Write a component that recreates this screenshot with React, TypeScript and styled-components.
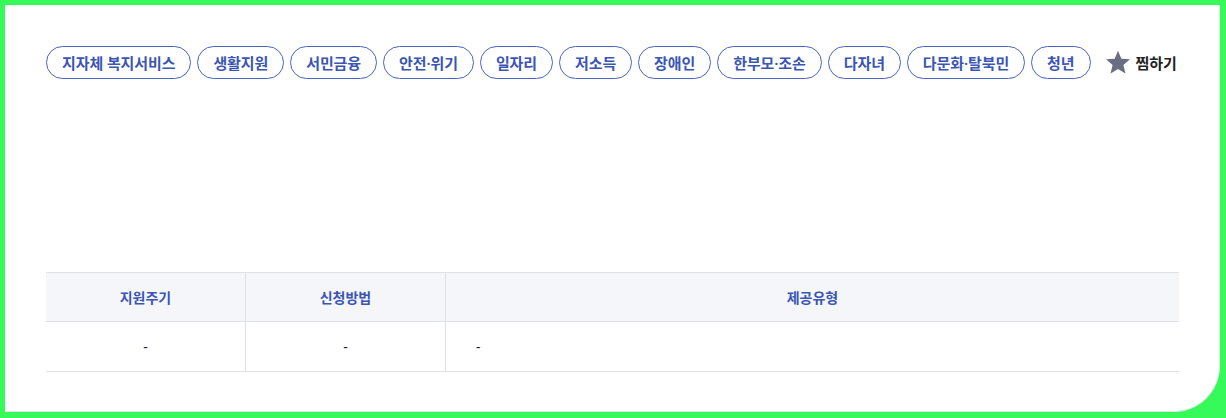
import React from "react";
import styled, { createGlobalStyle } from "styled-components";

const Global = createGlobalStyle`
  html, body { margin: 0; padding: 0; background: #36fa5a; }
  body { font-family: "Noto Sans", "Noto Sans CJK KR", sans-serif; }
  #root { padding: 5px 6px 6px 5px; }
`;

const Card = styled.div`
  box-sizing: border-box;
  height: 407px;
  background: #fff;
  border-bottom-right-radius: 46px;
  border-right: 1px solid #e2e4e6;
  border-bottom: 1px solid #e2e4e6;
  padding: 41px 40px 0 41px;
`;

const TagRow = styled.div`
  display: flex;
  align-items: center;
  gap: 6px;
  height: 33px;
`;

const Tag = styled.span`
  box-sizing: border-box;
  height: 33px;
  display: inline-flex;
  align-items: center;
  padding: 0 15px 1px;
  border: 1px solid #4a63bd;
  border-radius: 17px;
  color: #3b55b3;
  font-size: 15px;
  font-weight: 600;
  white-space: nowrap;
  letter-spacing: -0.1px;
`;

const Fav = styled.button`
  display: inline-flex;
  align-items: center;
  gap: 5px;
  margin-left: 8px;
  border: 0;
  background: none;
  padding: 0;
  font-family: inherit;
  font-size: 15px;
  font-weight: 700;
  color: #222;
  white-space: nowrap;
  cursor: pointer;
`;

const Table = styled.div`
  margin-top: 193px;
  display: grid;
  grid-template-columns: 200px 200px 1fr;
  border-top: 1px solid #dfe1e5;
  border-bottom: 1px solid #dfe1e5;
`;

const Head = styled.div<{ $last?: boolean }>`
  height: 48px;
  display: flex;
  align-items: center;
  justify-content: center;
  background: #f5f6fa;
  border-bottom: 1px solid #dfe1e5;
  border-right: ${(p) => (p.$last ? "0" : "1px solid #dfe1e5")};
  color: #3b55b3;
  font-size: 14px;
  font-weight: 700;
`;

const Cell = styled.div<{ $left?: boolean; $last?: boolean }>`
  height: 49px;
  display: flex;
  align-items: center;
  justify-content: ${(p) => (p.$left ? "flex-start" : "center")};
  padding-left: ${(p) => (p.$left ? "30px" : "0")};
  border-right: ${(p) => (p.$last ? "0" : "1px solid #dfe1e5")};
  color: #222;
  font-size: 14px;
`;

const tags = [
  "지자체 복지서비스",
  "생활지원",
  "서민금융",
  "안전·위기",
  "일자리",
  "저소득",
  "장애인",
  "한부모·조손",
  "다자녀",
  "다문화·탈북민",
  "청년",
];

const Star = () => (
  <svg width="26" height="25" viewBox="0 0 24 23" aria-hidden>
    <path
      d="M12 0.6l3.1 7.4 7.9 0.6-6 5.2 1.9 7.8L12 17.4l-6.9 4.2 1.9-7.8-6-5.2 7.9-0.6z"
      fill="#6b6d82"
    />
  </svg>
);

export default function App() {
  return (
    <>
      <Global />
      <Card>
        <TagRow>
          {tags.map((t) => (
            <Tag key={t}>{t}</Tag>
          ))}
          <Fav>
            <Star />
            찜하기
          </Fav>
        </TagRow>
        <Table>
          <Head>지원주기</Head>
          <Head>신청방법</Head>
          <Head $last>제공유형</Head>
          <Cell>-</Cell>
          <Cell>-</Cell>
          <Cell $left $last>-</Cell>
        </Table>
      </Card>
    </>
  );
}
